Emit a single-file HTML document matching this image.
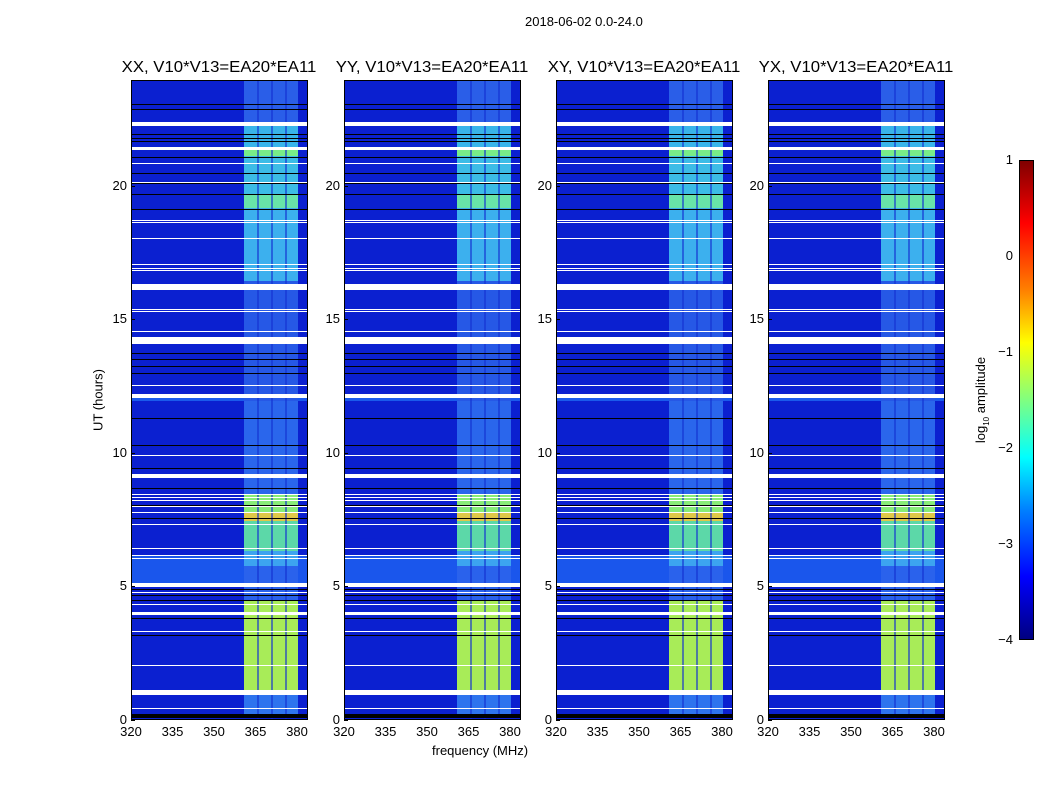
<!DOCTYPE html>
<html><head><meta charset="utf-8"><style>
body{margin:0;background:#fff;width:1050px;height:800px;position:relative;overflow:hidden;font-family:"Liberation Sans","DejaVu Sans",sans-serif;color:#000}
.t{position:absolute;white-space:nowrap;font-size:13px}
.panel{position:absolute;top:80px;width:177px;height:640px;border:1px solid #000;box-sizing:border-box;background:#0b20d0;overflow:hidden}
.r{position:absolute}
.tk{position:absolute;background:#000}
</style></head><body>
<div class="t" style="left:525px;top:14px;font-size:13px">2018-06-02 0.0-24.0</div>
<div class="t" style="left:98px;top:400px;transform:translate(-50%,-50%) rotate(-90deg)">UT (hours)</div>
<div class="t" style="left:432px;top:743px">frequency (MHz)</div>
<div id="root"></div>
<div style="position:absolute;left:1019px;top:160px;width:15px;height:480px;border:1px solid #000;box-sizing:border-box;background:linear-gradient(#800000 0%,#ff0000 13%,#ff8000 27%,#ffff00 38%,#80ff80 50%,#00ffff 62%,#0080ff 73%,#0000ff 87%,#000080 100%)"></div>
<div class="t" style="right:37px;top:152px">1</div>
<div class="t" style="right:37px;top:248px">0</div>
<div class="t" style="right:37px;top:344px">−1</div>
<div class="t" style="right:37px;top:440px">−2</div>
<div class="t" style="right:37px;top:536px">−3</div>
<div class="t" style="right:37px;top:632px">−4</div>
<div class="t" style="left:982px;top:400px;transform:translate(-50%,-50%) rotate(-90deg)">log<sub style="font-size:8px">10</sub> amplitude</div>
<script>
var lefts=[131,344,556,768],titles=["XX","YY","XY","YX"];
var band=[[80,125,"#2a5ee8"],[125,147,"#38b4ea"],[147,155,"#78ec88"],[155,193,"#3cbce6"],[193,207,"#68e4a8"],[207,280,"#3cb0ee"],[280,400,"#2658e6"],[400,493,"#2a66ec"],[493,512,"#88ec78"],[512,520,"#e0c848"],[520,550,"#5cd8a8"],[550,565,"#3ca4f0"],[565,600,"#2a62ec"],[600,690,"#a8ec58"],[690,716,"#2e74ee"]];
var white=[[121,125],[146,149],[162,163],[181,182],[219,220],[221,222],[237,238],[263,264],[267,268],[269,270],[283,289],[308,309],[310,311],[330,331],[336,343],[384,385],[393,397],[454,455],[473,477],[493,494],[496,497],[499,500],[505,506],[511,512],[523,524],[547,548],[554,555],[557,558],[582,586],[591,592],[603,604],[611,614],[630,631],[664,665],[689,694],[707,708]];
var black=[[103,104],[108,109],[133,134],[137,138],[140,141],[156,157],[172,173],[182,183],[193,194],[208,209],[352,353],[358,359],[365,366],[372,373],[417,418],[444,445],[467,468],[487,488],[504,505],[517,518],[588,589],[594,595],[599,600],[617,618],[634,635],[713,717]];
var root=document.getElementById("root"),h="";
lefts.forEach(function(L,i){
 h+='<div class="t" style="left:'+(L+88)+'px;top:59px;font-size:15.5px;transform:translateX(-50%) scaleX(1.08)">'+titles[i]+', V10*V13=EA20*EA11</div>';
 var p='<div class="panel" style="left:'+L+'px">';
 p+='<div class="r" style="left:0;right:0;top:475px;height:27px;background:#1a56ec"></div>';
 p+='<div class="r" style="left:0;right:0;top:313px;height:7px;background:#1a5aec"></div>';
 band.forEach(function(b){p+='<div class="r" style="left:112px;width:54px;top:'+(b[0]-80)+'px;height:'+(b[1]-b[0])+'px;background:'+b[2]+'"></div>';});
 [125,139,153].forEach(function(x){p+='<div class="r" style="left:'+x+'px;width:2px;top:0;bottom:0;background:rgba(20,50,210,.6)"></div>';});
 white.forEach(function(w){p+='<div class="r" style="left:0;right:0;top:'+(w[0]-80)+'px;height:'+(w[1]-w[0])+'px;background:#fff"></div>';});
 black.forEach(function(w){p+='<div class="r" style="left:0;right:0;top:'+(w[0]-80)+'px;height:'+(w[1]-w[0])+'px;background:#000"></div>';});
 p+='</div>';h+=p;
 [[0,720],[5,586],[10,453],[15,319],[20,186]].forEach(function(y){
  h+='<div class="t" style="left:'+(L-30)+'px;width:26px;text-align:right;top:'+(y[1]-8)+'px">'+y[0]+'</div>';
  h+='<div class="tk" style="left:'+L+'px;top:'+y[1]+'px;width:4px;height:1px"></div>';
 });
 [[320,0],[335,41.5],[350,83],[365,124.5],[380,166]].forEach(function(x){
  h+='<div class="t" style="left:'+(L+x[1]-12)+'px;width:24px;text-align:center;top:724px">'+x[0]+'</div>';
 });
});
root.innerHTML=h;
</script>
</body></html>
